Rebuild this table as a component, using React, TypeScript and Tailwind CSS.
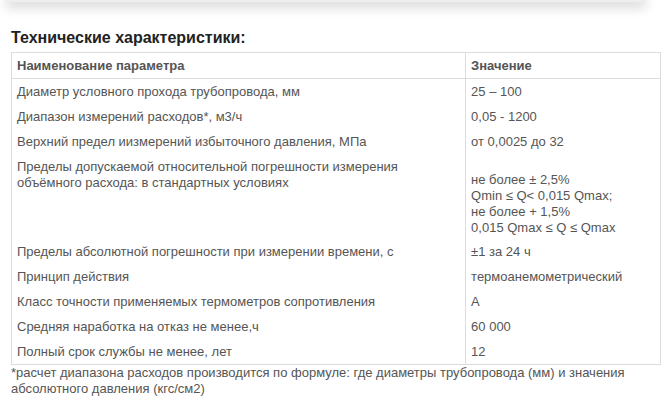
import React from "react";

const rows: [string, React.ReactNode][] = [
  ["Диаметр условного прохода трубопровода, мм", "25 – 100"],
  ["Диапазон измерений расходов*, м3/ч", "0,05 - 1200"],
  ["Верхний предел иизмерений избыточного давления, МПа", "от 0,0025 до 32"],
];

const rows2: [string, string][] = [
  ["Пределы абсолютной погрешности при измерении времени, с", "±1 за 24 ч"],
  ["Принцип действия", "термоанемометрический"],
  ["Класс точности применяемых термометров сопротивления", "А"],
  ["Средняя наработка на отказ не менее,ч", "60 000"],
  ["Полный срок службы не менее, лет", "12"],
];

function Row({ a, b }: { a: string; b: React.ReactNode }) {
  return (
    <tr>
      <td className="border-l border-[#dcdcdc] px-[5px] py-[4.5px] align-top leading-[16px]">{a}</td>
      <td className="border-l border-r border-[#dcdcdc] px-[5px] py-[4.5px] align-top leading-[16px]">{b}</td>
    </tr>
  );
}

export default function App() {
  return (
    <div
      className="w-[671px] h-[396px] bg-white overflow-hidden relative text-[#555]"
      style={{ fontFamily: '"Liberation Sans", Arial, sans-serif' }}
    >
      <div className="h-0 overflow-visible">
        <div className="h-[12px] -mt-[10px] w-[640px] ml-[6px] bg-[#eee] shadow-[0_6px_12px_rgba(0,0,0,0.15)]" />
      </div>
      <div className="pt-[38px] pl-[11px]">
        <h2 className="text-[16px] font-bold leading-[20px] text-[#222] mb-[4px]">Технические характеристики:</h2>
        <table className="w-[650px] border-collapse text-[13px]">
          <colgroup>
            <col className="w-[455px]" />
            <col className="w-[195px]" />
          </colgroup>
          <thead>
            <tr>
              <th className="border border-[#dcdcdc] px-[5px] py-[4.5px] text-left font-bold leading-[16px]">Наименование параметра</th>
              <th className="border border-[#dcdcdc] px-[5px] py-[4.5px] text-left font-bold leading-[16px]">Значение</th>
            </tr>
          </thead>
          <tbody>
            {rows.map(([a, b]) => (
              <Row key={a} a={a} b={b} />
            ))}
            <tr>
              <td className="border-l border-[#dcdcdc] px-[5px] pt-[4.5px] align-top leading-[16px]">
                Пределы допускаемой относительной погрешности измерения
                <br />
                объёмного расхода: в стандартных условиях
              </td>
              <td className="border-l border-r border-[#dcdcdc] px-[5px] pt-[18px] pb-[3px] align-top leading-[16px]">
                не более ± 2,5%
                <br />
                Qmin ≤ Q&lt; 0,015 Qmax;
                <br />
                не более + 1,5%
                <br />
                0,015 Qmax ≤ Q ≤ Qmax
              </td>
            </tr>
            {rows2.map(([a, b], i) => (
              <tr key={a}>
                <td className={`border-l border-[#dcdcdc] px-[5px] py-[4.5px] align-top leading-[16px] ${i === rows2.length - 1 ? "border-b" : ""}`}>{a}</td>
                <td className={`border-l border-r border-[#dcdcdc] px-[5px] py-[4.5px] align-top leading-[16px] ${i === rows2.length - 1 ? "border-b" : ""}`}>{b}</td>
              </tr>
            ))}
          </tbody>
        </table>
        <p className="text-[13px] leading-[16px] w-[640px]">
          *расчет диапазона расходов производится по формуле: где диаметры трубопровода (мм) и значения абсолютного давления (кгс/см2)
        </p>
      </div>
    </div>
  );
}
